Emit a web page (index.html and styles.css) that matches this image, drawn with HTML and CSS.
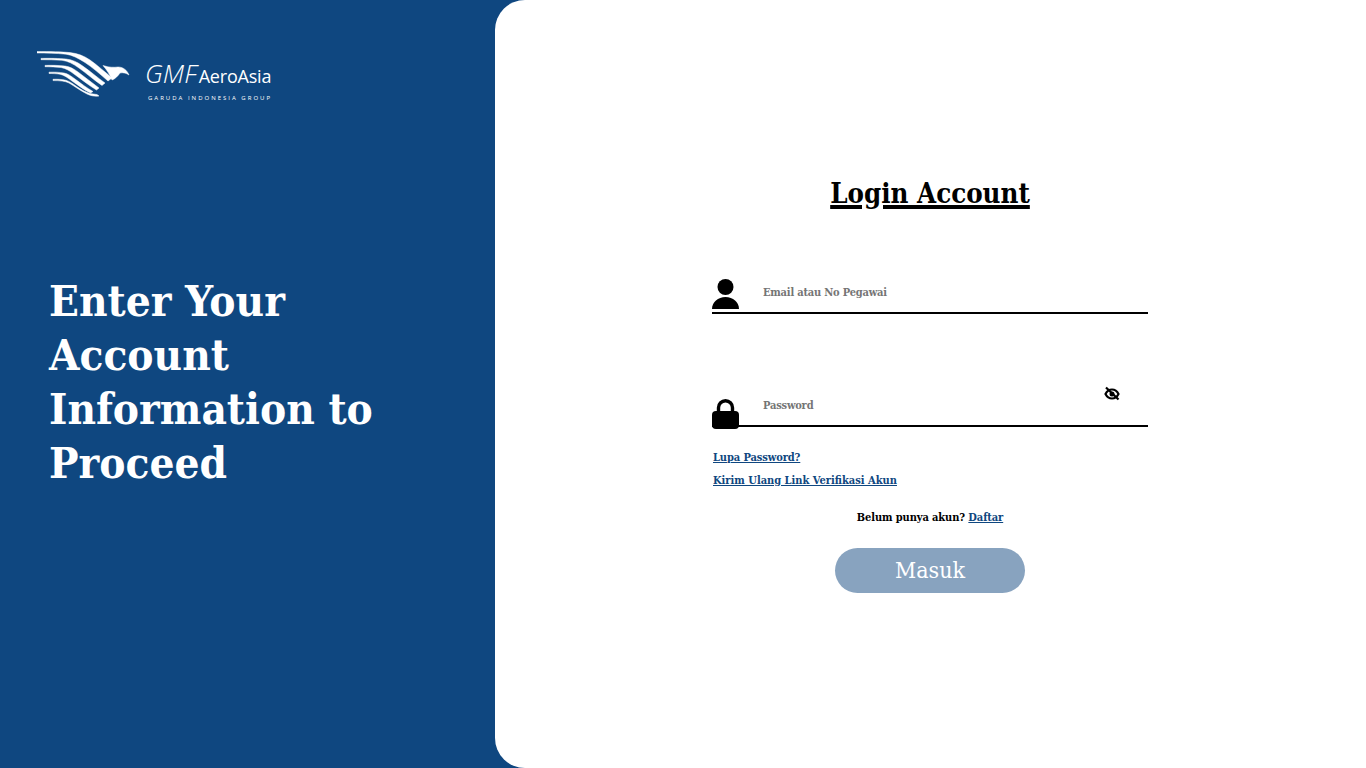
FILE: index.html
```html
<!DOCTYPE html>
<html lang="id">
<head>
<meta charset="utf-8">
<title>Login</title>
<link rel="stylesheet" href="styles.css">
</head>
<body>
<main class="page">
  <section class="side">
    <div class="logo">
      <svg class="bird" width="94" height="46" viewBox="37 51 94 46" aria-hidden="true">
        <g fill="#fff" stroke="#fff" stroke-width="0.500">
          <path d="M37 51.600C50 51.600 62 51.800 70 52.600C78 53.400 84 56 90 60C97 65 105 72 112 78L108 81C100 74 92 67 85 62.500C78 58 72 55 66 54.200C56 53.200 46 53 37 53Z"/>
          <path d="M41 58.400C50 58.200 60 58.400 66 59C72 59.600 77 62 82 65.500C90 71 98 78 105 83L102 85.500C94 80 86 73 79 68C73 63.800 68 61 62 60.300C55 59.800 48 59.700 41 59.700Z"/>
          <path d="M45 65.400C52 65.200 60 65.400 65 66C70 66.600 74 69 78 72C85 77 92 83 99 88L96.500 90C89 85.500 81 79 74 74C70 71 66 68.500 61 67.500C56 66.900 50 66.700 45 66.700Z"/>
          <path d="M49 72.200C54 72 60 72.200 64 73C68 73.800 71 76 75 79C81 83.500 87 88 93 91.500L90.500 93C84 90 78 85 72 81C68 78 64 75 60 74.200C56 73.600 52 73.500 49 73.500Z"/>
          <path d="M53 79.300C57 79.100 62 79.300 66 80.300C70 81.500 73 84 77 86.800C81 89.500 86 92.500 90 93.500L97 94.500L99 96C95 96.500 91 96 87 94C81 91 74 86 69 83C65 81 60 80.600 53 80.600Z"/>
          <path d="M103 65.500C109 67.500 114 67.500 118 67C123 67 127 70 129 75C126 73 123 72.300 120 73C118 76 115 79 112 80C110 75 107 70 103 65.500Z"/>
        </g>
      </svg>
      <div class="brand">
        <div class="brand-name"><span class="gmf">GMF</span><span class="aero">AeroAsia</span></div>
        <div class="group">GARUDA INDONESIA GROUP</div>
      </div>
    </div>
    <h1 class="tagline">Enter Your Account Information to Proceed</h1>
  </section>
  <section class="panel">
    <form class="form">
      <h2 class="title">Login Account</h2>
      <div class="field">
        <svg class="icon-left icon-user" width="27" height="31" viewBox="0 0 27 31" aria-hidden="true">
          <circle cx="13.500" cy="8" r="8"/>
          <path d="M0 30C0 23 6 18 13.500 18S27 23 27 30Z"/>
        </svg>
        <input class="input" type="text" placeholder="Email atau No Pegawai">
      </div>
      <div class="field field-second">
        <svg class="icon-left icon-lock" width="27" height="30" viewBox="0 0 27 30" aria-hidden="true">
          <path d="M6.500 13V8.700a7 7 0 0 1 14 0V13" fill="none" stroke="#000" stroke-width="3.400"/>
          <rect x="0" y="12" width="27" height="18" rx="4"/>
        </svg>
        <input class="input" type="password" placeholder="Password">
        <svg class="icon-eye" width="16" height="16" viewBox="0 0 16 16" aria-hidden="true">
          <path d="M1.500 8C3 5 5.500 3.500 8 3.500s5 1.500 6.500 4.500c-1.500 3-4 4.500-6.500 4.500S3 11 1.500 8Z" fill="none" stroke="#000" stroke-width="2.200"/>
          <circle cx="8" cy="8" r="2.500"/>
          <path d="M2 1.500 14.500 13.500" stroke="#000" stroke-width="2.200"/>
        </svg>
      </div>
      <a class="link link-first" href="#">Lupa Password?</a>
      <a class="link link-second" href="#">Kirim Ulang Link Verifikasi Akun</a>
      <p class="register">Belum punya akun? <a class="link-inline" href="#">Daftar</a></p>
      <button class="submit" type="button">Masuk</button>
    </form>
  </section>
</main>
</body>
</html>
```
FILE: styles.css
```css
* { box-sizing: border-box; }
html, body { margin: 0; height: 100%; }
body {
  background: #0f4780;
  font-family: "DejaVu Serif Condensed", "Liberation Serif", serif;
  overflow: hidden;
}
.page { display: flex; height: 768px; }
.side {
  width: 495px;
  flex: none;
  padding: 51px 0 0 37px;
  color: #fff;
}
.logo { display: flex; align-items: flex-start; height: 51px; }
.bird { display: block; flex: none; }
.brand { margin-left: 14px; font-family: "Open Sans", sans-serif; font-weight: 400; }
.brand-name { display: flex; align-items: baseline; height: 43px; padding-top: 6px; line-height: 32px; white-space: nowrap; }
.gmf { font-size: 26px; font-style: italic; font-weight: 300; letter-spacing: 0; }
.aero { font-size: 18px; margin-left: 2px; letter-spacing: -0.2px; }
.group { font-size: 6px; letter-spacing: 2px; line-height: 8px; margin-left: 3px; white-space: nowrap; }
.tagline {
  margin: 172px 0 0 12px;
  width: 360px;
  font-size: 43.700px;
  line-height: 54px;
  font-weight: 700;
}
.panel {
  flex: 1;
  background: #fff;
  border-radius: 30px 0 0 30px;
  display: flex;
  justify-content: center;
  padding: 174px 1px 0 0;
}
.form { width: 436px; display: flex; flex-direction: column; }
.title {
  margin: 0;
  text-align: center;
  font-size: 27.400px;
  line-height: 38px;
  font-weight: 700;
  color: #000;
  text-decoration: underline;
  text-decoration-thickness: 4px;
}
.field { position: relative; margin-top: 58px; height: 44px; }
.field-second { margin-top: 69px; }
.input {
  display: block;
  width: 100%;
  height: 44px;
  border: 0;
  border-bottom: 2px solid #000;
  outline: none;
  background: transparent;
  padding: 2px 0 0 51px;
  font-family: inherit;
  font-size: 11px;
  letter-spacing: -0.2px;
  font-weight: 700;
}
.input::placeholder { color: #757575; opacity: 1; }
.icon-left { position: absolute; left: 0; fill: #000; }
.icon-user { top: 9px; }
.icon-lock { top: 16px; }
.icon-eye { position: absolute; left: 392px; top: 3px; }
.link, .link-inline {
  color: #0f4780;
  font-size: 11px;
  font-weight: 700;
  text-decoration: underline;
}
.link { align-self: flex-start; line-height: 16px; margin-left: 1px; }
.link-first { margin-top: 23px; letter-spacing: -0.1px; }
.link-second { margin-top: 7px; }
.register {
  margin: 21px 0 0;
  text-align: center;
  color: #000;
  font-size: 11px;
  letter-spacing: -0.1px;
  font-weight: 700;
  line-height: 16px;
}
.submit {
  align-self: center;
  margin-top: 22px;
  width: 190px;
  height: 45px;
  border: 0;
  border-radius: 23px;
  padding: 0 0 2px 0;
  background: #88a3bf;
  color: #fff;
  font-family: inherit;
  font-size: 23px;
}
```
